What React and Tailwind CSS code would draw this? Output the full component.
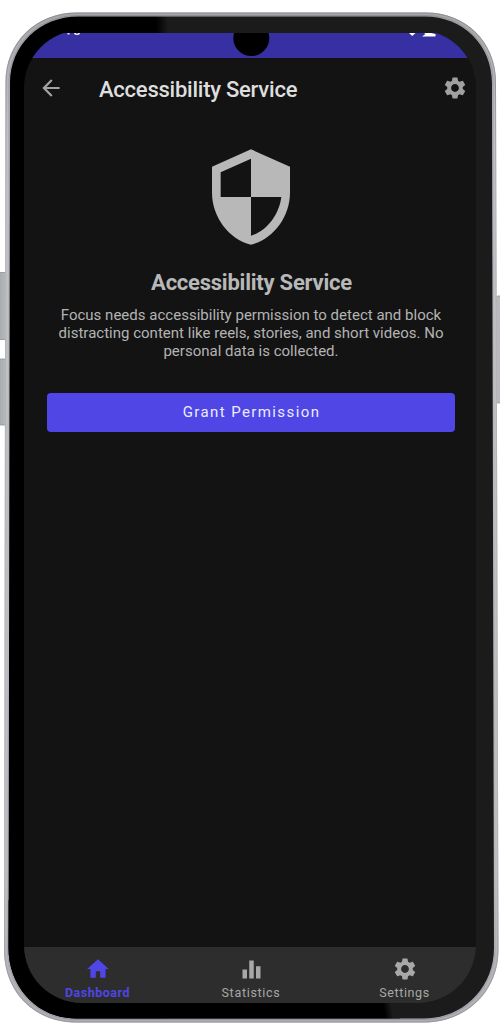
import React from "react";
import { MdArrowBack, MdSettings, MdSecurity, MdHome, MdEqualizer } from "react-icons/md";

function DeviceShell() {
  return (
    <svg className="absolute inset-0" width="500" height="1024" viewBox="0 0 500 1024" aria-hidden="true">
      <defs>
        <linearGradient id="metal" x1="0" y1="0" x2="0" y2="1">
          <stop offset="0" stopColor="#a5a6a9" />
          <stop offset="0.12" stopColor="#bfc1c5" />
          <stop offset="0.85" stopColor="#bdbec2" />
          <stop offset="1" stopColor="#b0acb3" />
        </linearGradient>
        <linearGradient id="rim" x1="0" y1="0" x2="0" y2="1">
          <stop offset="0" stopColor="#85868a" />
          <stop offset="0.08" stopColor="#909195" />
          <stop offset="0.2" stopColor="#b0b1b5" />
          <stop offset="0.85" stopColor="#b0b1b5" />
          <stop offset="1" stopColor="#8e8c92" />
        </linearGradient>
        <linearGradient id="glass" gradientUnits="userSpaceOnUse" x1="156" y1="0" x2="168" y2="0">
          <stop offset="0" stopColor="#000000" />
          <stop offset="1" stopColor="#1b1b1b" />
        </linearGradient>
        <linearGradient id="glassLow" gradientUnits="userSpaceOnUse" x1="384" y1="1010" x2="392" y2="1008.500">
          <stop offset="0" stopColor="#000000" />
          <stop offset="1" stopColor="#1b1b1b" />
        </linearGradient>
        <linearGradient id="key" x1="0" y1="0" x2="1" y2="0">
          <stop offset="0" stopColor="#a5a8ab" />
          <stop offset="1" stopColor="#b9bcbf" />
        </linearGradient>
      </defs>
      <rect x="-2" y="272.500" width="9" height="67" rx="2" fill="url(#key)" stroke="#8e9194" strokeWidth="0.8" />
      <rect x="-2" y="359" width="9" height="66" rx="2" fill="url(#key)" stroke="#8e9194" strokeWidth="0.8" />
      <rect x="496" y="296" width="8" height="107" rx="2" fill="#b9babd" stroke="#9c9da0" strokeWidth="0.8" />
      <path d="M77 12.500H426C466 12.500 496 42 496 82L498.500 950C498.500 992 466 1022.500 424 1022.500H76C34 1022.500 4 992 4 950L5.500 82C5.500 42 36 12.500 77 12.500Z" fill="url(#metal)" />
      <path d="M77 13H426C465.500 13 495.500 42.500 495.500 82L498 950C498 991.500 465.500 1022 424 1022H76C34.500 1022 4.500 991.500 4.500 950L6 82C6 42.500 36.500 13 77 13Z" fill="none" stroke="url(#rim)" strokeWidth="0.8" />
      <path d="M78 15.500H425C463.500 15.500 493 44.500 493 83L495 948C495 988.500 463.500 1019.500 424 1019.500H76C37.500 1019.500 7.500 988.500 7.500 948L9 83C9 44.500 39.500 15.500 78 15.500Z" fill="none" stroke="url(#rim)" strokeWidth="0.7" />
      <path d="M78 16.500H425C463 16.500 492 45 492 83L494 948C494 988 463 1018.500 424 1018.500H76C38 1018.500 8.500 988 8.500 948L10 83C10 45 40 16.500 78 16.500Z" fill="url(#glass)" />
      <path d="M8.600 900H400V1018.500H76C38 1018.500 8.500 988 8.500 948Z" fill="url(#glassLow)" />
    </svg>
  );
}

function StatusBar() {
  return (
    <div className="relative h-[25px] shrink-0 overflow-hidden bg-[#3730a3]">
      <svg className="absolute inset-0" width="452" height="25" viewBox="0 0 452 25" aria-hidden="true">
        <circle cx="227.300" cy="5" r="18" fill="#000" />
        <path d="M385 0h6.500L388.200 3Z M400 0h7l4.500 1V3.500H398L401.500 1Z" fill="#fff" />
        <path d="M43.500 0h2v1.500h-2Z M50 0c0 2.800 6 2.800 6 0h-2c0 1-2 1-2 0Z" fill="#fff" fillOpacity="0.9" />
      </svg>
    </div>
  );
}

function NavItem({ icon, label, className }) {
  return (
    <div className={"flex w-[153.500px] shrink-0 flex-col items-center " + className}>
      <div className="flex h-[26px] items-center">{icon}</div>
      <span className="mt-[3px] text-[12.500px] leading-[16px]">{label}</span>
    </div>
  );
}

export default function App() {
  return (
    <div className="relative h-[1024px] w-[500px] overflow-hidden bg-white font-['Roboto',sans-serif]">
      <DeviceShell />
      <div className="relative mt-[33px] ml-6 h-[970px] w-[452px] overflow-hidden">
        <div className="-mt-[3px] flex h-[973px] w-[452px] flex-col overflow-hidden rounded-[58px] bg-[#131313] pt-[3px]">
          <StatusBar />
          <header className="flex h-[60px] shrink-0 items-center pr-[8px] pl-[14px]">
            <MdArrowBack size={26} className="text-[#a3a3a3]" />
            <h1 className="mt-[3px] ml-[35px] flex-1 text-[22px] leading-[28px] font-medium tracking-[-0.240px] text-[#dedede]">Accessibility Service</h1>
            <MdSettings size={26} className="text-[#a0a0a0]" />
          </header>
          <main className="flex flex-1 flex-col items-center pt-[27px] pl-[2px]">
            <MdSecurity size={104} className="text-[#b8b8b8]" />
            <h2 className="mt-[20px] pl-px text-[22px] leading-[28px] font-bold tracking-[-0.240px] text-[#b8b8b8]">Accessibility Service</h2>
            <p className="mt-[9px] text-center text-[15px] leading-[18px] tracking-[0.010px] whitespace-nowrap text-[#b3b3b3]">
              Focus needs accessibility permission to detect and block<br />
              distracting content like reels, stories, and short videos. No<br />
              personal data is collected.
            </p>
            <button className="mt-[32.600px] h-[39px] w-[408px] rounded-[4px] bg-[#4f46e5] pt-px pl-px text-[15px] tracking-[1.400px] text-[#ececff]">
              Grant Permission
            </button>
          </main>
          <nav className="flex h-[56px] shrink-0 justify-center bg-[#2d2d2d] pt-[9px] pl-[2px]">
            <NavItem icon={<MdHome size={26} />} label="Dashboard" className="font-bold tracking-[0.500px] text-[#4f46e5]" />
            <NavItem icon={<MdEqualizer size={27} />} label="Statistics" className="tracking-[0.700px] text-[#a8a8a8]" />
            <NavItem icon={<MdSettings size={26} />} label="Settings" className="tracking-[0.600px] text-[#a8a8a8]" />
          </nav>
        </div>
      </div>
    </div>
  );
}
